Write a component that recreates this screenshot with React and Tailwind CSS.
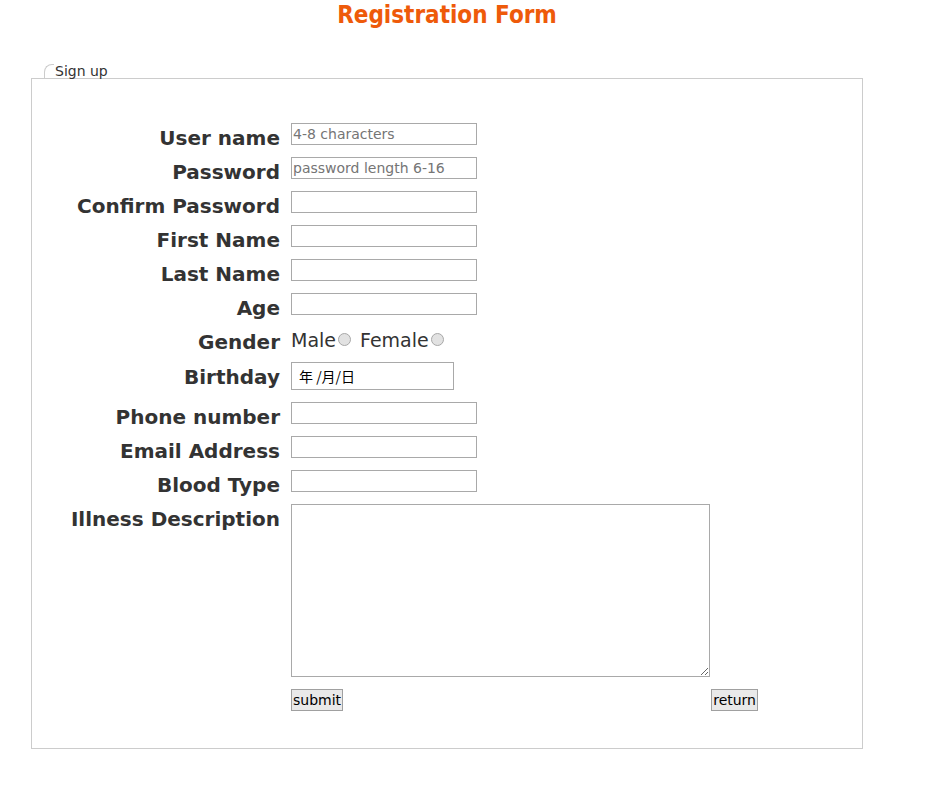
const fields = [
  { label: "User name", placeholder: "4-8 characters" },
  { label: "Password", placeholder: "password length 6-16", type: "password" },
  { label: "Confirm Password", type: "password" },
  { label: "First Name" },
  { label: "Last Name" },
  { label: "Age" },
];

const moreFields = [
  { label: "Phone number" },
  { label: "Email Address" },
  { label: "Blood Type" },
];

const Row = ({ label, children }) => (
  <div className="flex items-start">
    <label className="w-[248px] mt-1 -mb-1 text-right text-[20px] leading-[22px] font-bold text-[#333]">
      {label}
    </label>
    <div className="ml-[11px]">{children}</div>
  </div>
);

const TextField = ({ placeholder, type = "text" }) => (
  <input
    type={type === "password" ? "text" : type}
    placeholder={placeholder}
    className="block w-[186px] h-[22px] border border-[#a9a9a9] px-[1px] text-[14px] text-[#222] placeholder:text-[#757575] outline-none"
  />
);

const Radio = ({ name }) => (
  <input
    type="radio"
    name={name}
    className="appearance-none w-[13px] h-[13px] rounded-full border border-[#a8a8a8] bg-[#e2e2e2] ml-[2px] mt-[4px]"
  />
);

export default function App() {
  return (
    <div className="min-h-screen bg-white font-['DejaVu_Sans',sans-serif]">
      <div className="w-[832px] ml-[31px]">
        {/* title */}
        <h1 className="h-[30px] pt-[1px] text-center text-[24px] leading-[28px] font-bold text-[#ee5a0a] font-['DejaVu_Sans_Condensed','DejaVu_Sans',sans-serif]">
          Registration Form
        </h1>

        {/* fieldset */}
        <div className="relative mt-[48px] h-[671px] border border-[#cccccc] pt-[44px]">
          <div className="absolute left-[12px] bottom-full flex items-end">
            <div className="w-[10px] h-[15px] border-l border-t border-[#cccccc] rounded-tl-[8px]" />
            <span className="pl-[1px] text-[14px] leading-[16px] text-[#333]">
              Sign up
            </span>
          </div>

          <form className="flex flex-col gap-[12px]">
            {fields.map((f) => (
              <Row key={f.label} label={f.label}>
                <TextField placeholder={f.placeholder} type={f.type} />
              </Row>
            ))}

            <Row label="Gender">
              <div className="mt-[2px] -mb-[2px] flex items-start h-[23px] text-[19px] leading-[23px] text-[#333]">
                <span>Male</span>
                <Radio name="gender" />
                <span className="ml-[9px]">Female</span>
                <Radio name="gender" />
              </div>
            </Row>

            <Row label="Birthday">
              <div className="w-[163px] h-[28px] border border-[#a9a9a9] pl-[7px] flex items-center text-[14px] text-black font-['Noto_Sans_CJK_SC','DejaVu_Sans',sans-serif]">
                年 /月/日
              </div>
            </Row>

            {moreFields.map((f) => (
              <Row key={f.label} label={f.label}>
                <TextField />
              </Row>
            ))}

            <Row label="Illness Description">
              <textarea className="block w-[419px] h-[173px] border border-[#a9a9a9] resize outline-none text-[13px]" />
            </Row>

            <Row label="">
              <div className="w-[467px] flex justify-between">
                <button
                  type="button"
                  className="h-[22px] px-[1px] border border-[#a0a0a0] bg-[#e9e9e9] text-[14px] leading-[18px] text-black"
                >
                  submit
                </button>
                <button
                  type="button"
                  className="h-[22px] px-[1px] border border-[#a0a0a0] bg-[#e9e9e9] text-[14px] leading-[18px] text-black"
                >
                  return
                </button>
              </div>
            </Row>
          </form>
        </div>
      </div>
    </div>
  );
}
